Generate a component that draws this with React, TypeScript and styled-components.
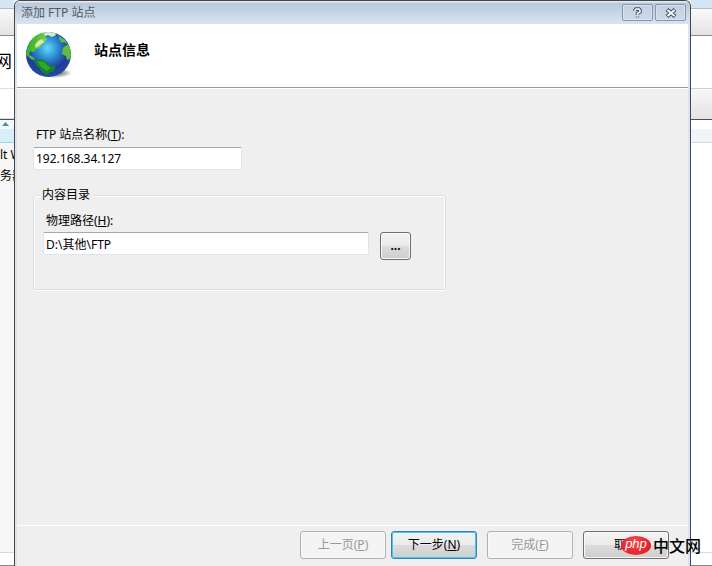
import React from "react";
import styled, { createGlobalStyle, css } from "styled-components";

const GlobalStyle = createGlobalStyle`
  * { box-sizing: border-box; }
  body {
    margin: 0;
    background: #fff;
    color: #000;
    font: 12px/16px "Noto Sans", "Noto Sans CJK SC", sans-serif;
    overflow: hidden;
  }
  button, input { font: inherit; color: inherit; }
`;

const Desktop = styled.main`
  position: relative;
  display: grid;
  grid-template-columns: 14px minmax(0, 1fr) 21px;
  height: 100vh;
`;

const Behind = styled.div`
  display: flex;
  flex-direction: column;
  overflow: hidden;
  white-space: nowrap;
`;

const Strip = styled.div<{ $h: number; $bg?: string; $line?: string }>`
  flex: none;
  height: ${(p) => p.$h}px;
  background: ${(p) => p.$bg ?? "#fff"};
  border-bottom: 1px solid ${(p) => p.$line ?? "transparent"};
`;

const Heading = styled(Strip)`
  padding-top: 12px;
  font: 18px/24px "Noto Sans CJK SC", sans-serif;
  text-indent: -6px;
`;

const SortHead = styled(Strip)`
  padding: 2px 0 0 2px;
  line-height: 0;
`;

const Tree = styled.div`
  flex: 1;
  background: #f6f6f6;
  border-bottom: 1px solid #d8d8d8;
  padding-top: 1px;
  line-height: 21px;
`;

const Blank = styled.div`
  flex: 1;
  border-bottom: 1px solid #dcdcdc;
`;

const Dialog = styled.section`
  display: flex;
  flex-direction: column;
  min-width: 0;
  border: solid #464648;
  border-width: 1px 1px 0;
  border-radius: 6px 6px 0 0;
  background: #d9e5f2;
  padding: 0 2px;
  overflow: hidden;
`;

const TitleBar = styled.header`
  display: flex;
  align-items: center;
  justify-content: space-between;
  height: 23px;
  margin: 0 -2px;
  padding: 0 4px 0 6px;
  background: linear-gradient(#e4edf6 0 1px, #b9c9da 2px, #d7e4f2);
  color: #505962;
`;

const Caption = styled.h1`
  margin: 0;
  font: inherit;
`;

const CaptionButtons = styled.div`
  display: flex;
  gap: 2px;
`;

const CaptionButton = styled.button`
  display: flex;
  align-items: center;
  justify-content: center;
  width: 31px;
  height: 17px;
  padding: 0;
  border: 1px solid #8796b2;
  border-radius: 2px;
  background: linear-gradient(#c3d0e0, #cbd9e9);
  box-shadow: inset 0 0 0 1px #d8e3ef;
`;

const Banner = styled.div`
  display: flex;
  gap: 21px;
  height: 65px;
  padding: 5px 6px;
  background: #fff;
  border-bottom: 1px solid #fff;
  box-shadow: inset 0 -1px #9b9b9b;
`;

const BannerTitle = styled.h2`
  margin: 11px 0 0;
  font-size: 14px;
  line-height: 20px;
  font-weight: 700;
`;

const Content = styled.form`
  flex: 1;
  padding: 38px 16px 0;
  background: #efefef;
`;

const Label = styled.label`
  display: block;
  margin: 0 0 4px 3px;
`;

const TextBox = styled.input<{ $wide?: boolean }>`
  display: block;
  width: ${(p) => (p.$wide ? 326 : 209)}px;
  height: 23px;
  padding: 0 2px;
  border: 1px solid #dfe5ee;
  border-top-color: #a3a8b2;
  border-radius: 2px;
  outline: none;
  background: #fff;
`;

const Group = styled.fieldset`
  width: 413px;
  height: 103px;
  margin: 17px 0 0;
  padding: 10px 9px 0;
  border: 1px solid #d5dfe5;
  border-radius: 3px;
  box-shadow: 0 1px #fff, inset 1px 1px #fff, inset -1px 0 #fff;

  legend {
    margin-left: -3px;
    padding: 0 2px;
    background: #efefef;
  }

  ${Label} { margin-bottom: 3px; }
`;

const PathRow = styled.div`
  display: flex;
  gap: 11px;
`;

const Footer = styled.footer`
  display: flex;
  justify-content: flex-end;
  height: 41px;
  padding: 5px 19px 0 0;
  border-top: 1px solid #fff;
  background: #efefef;
`;

const PushButton = styled.button<{ $primary?: boolean; $small?: boolean }>`
  width: 86px;
  height: 28px;
  padding: 0;
  border: 1px solid #707070;
  border-radius: 3px;
  background: linear-gradient(#f3f3f3, #ebebeb 48%, #dcdcdc 50%, #cecece);
  box-shadow: inset 0 0 0 1px #f8f8f8;

  &:disabled {
    border-color: #adb2b5;
    background: #f4f4f4;
    color: #989898;
  }

  ${(p) =>
    p.$primary &&
    css`
      border-color: #3c7fb1;
      box-shadow: inset 0 0 0 1px #42cbf2;
    `}

  ${(p) =>
    p.$small &&
    css`
      width: 31px;
      font-weight: 700;
    `}
`;

const Buttons = styled.div<{ $gap: number }>`
  display: flex;
  align-items: flex-start;
  gap: ${(p) => p.$gap}px;
`;

const Watermark = styled.div`
  position: absolute;
  right: 11px;
  bottom: 10px;
  display: flex;
  align-items: center;
  gap: 2px;
  font: 500 16px/22px "Noto Sans CJK SC", sans-serif;
`;

const Badge = styled.span`
  width: 30px;
  height: 19px;
  border-radius: 50%;
  background: radial-gradient(circle at 45% 30%, #f4444a, #e0141c);
  color: #fff;
  font: italic 13px/16px "Liberation Sans", sans-serif;
  text-align: center;
`;

const Globe = () => (
  <svg width="50" height="50" viewBox="0 0 50 50" aria-hidden="true">
    <defs>
      <radialGradient id="sea" cx="0.48" cy="0.36" r="0.62">
        <stop offset="0" stopColor="#62dcf5" />
        <stop offset="0.4" stopColor="#2b86d0" />
        <stop offset="0.75" stopColor="#1f3b9b" />
        <stop offset="1" stopColor="#264a9c" />
      </radialGradient>
      <radialGradient id="shade">
        <stop offset="0" stopColor="#444" stopOpacity="0.9" />
        <stop offset="0.6" stopColor="#666" stopOpacity="0.5" />
        <stop offset="1" stopColor="#777" stopOpacity="0" />
      </radialGradient>
      <linearGradient id="land" x1="0" y1="0.2" x2="1" y2="0.6">
        <stop offset="0" stopColor="#2f9a34" />
        <stop offset="0.45" stopColor="#4fbf2f" />
        <stop offset="1" stopColor="#8fdc5e" />
      </linearGradient>
      <clipPath id="disc"><circle cx="25.5" cy="25.5" r="22.5" /></clipPath>
    </defs>
    <ellipse cx="32" cy="44" rx="17" ry="5" fill="url(#shade)" />
    <circle cx="25.5" cy="25.5" r="22.5" fill="url(#sea)" />
    <g clipPath="url(#disc)">
      <path d="M3 22 6 13 13 6l8-3 3 2-2 3 2 2-2 3-4 3-1 3-4 1-2 3-4-1-1 4 4 2 2 3-4-1-6-5Z" fill="url(#land)" />
      <path d="m15 12 4-2 2 3-4 3-4 3-1-3Z" fill="#d9edab" />
      <path d="m20 4 4-2 8 2 1 2-4 2-4-2-2 1Z" fill="#d5ebc6" />
      <path d="m36 7 6 4 3 5-4-3-2 1-3-4Z" fill="#62b94d" />
      <path d="m42 17 4-2 3 9-2 6-3 1-1-4-4-2 1-6Z" fill="#61bd3c" />
      <path d="m12 31 6-1 6 3 2 3 7 1-2 5-5 2-2 2-5-3-4-5-3-3Z" fill="#16802e" />
      <path d="m14 32 7 1 4 4 3 2-4 3-6-4Z" fill="#2fa62e" />
    </g>
  </svg>
);

export default function App() {
  return (
    <>
      <GlobalStyle />
      <Desktop>
        <Behind>
          <Strip $h={9} $bg="#d5e5f3" $line="#aebdcb" />
          <Strip $h={27} $bg="linear-gradient(#fafafa, #e4e2e2)" $line="#8b8b8b" />
          <Heading $h={53} $line="#dedede">网</Heading>
          <Strip $h={29} />
          <Strip $h={2} $bg="#ddd" $line="#4b4b6b" />
          <SortHead $h={23} $bg="linear-gradient(#f1f9fd 40%, #d9eef8 42%)" $line="#9fd3ee">
            <svg width="7" height="4" viewBox="0 0 7 4"><path d="M0 4 3.5 0 7 4Z" fill="#4b8fb0" /></svg>
          </SortHead>
          <Tree>
            <div>lt Web Site</div>
            <div>务器</div>
          </Tree>
          <Strip $h={13} $line="#888" />
        </Behind>

        <Dialog role="dialog" aria-labelledby="caption">
          <TitleBar>
            <Caption id="caption">添加 FTP 站点</Caption>
            <CaptionButtons>
              <CaptionButton type="button" aria-label="帮助">
                <svg width="9" height="12" viewBox="0 0 9 12" fill="none">
                  <path d="M2 4V3L3 2h3l1 1v2L4.500 6.500V8M4.500 9.500v1" stroke="#454e64" strokeWidth="3.500" />
                  <path d="M2 4V3L3 2h3l1 1v2L4.500 6.500V8M4.500 9.500v1" stroke="#fff" strokeWidth="1.500" />
                </svg>
              </CaptionButton>
              <CaptionButton type="button" aria-label="关闭">
                <svg width="12" height="10" viewBox="0 0 12 10" fill="none">
                  <path d="m2 1.500 8 7M10 1.500l-8 7" stroke="#454e64" strokeWidth="4" />
                  <path d="m2.500 2 7 6M9.500 2l-7 6" stroke="#fff" strokeWidth="2" />
                </svg>
              </CaptionButton>
            </CaptionButtons>
          </TitleBar>
          <Banner>
            <Globe />
            <BannerTitle>站点信息</BannerTitle>
          </Banner>
          <Content id="site">
            <Label htmlFor="name">FTP 站点名称(<u>T</u>):</Label>
            <TextBox id="name" defaultValue="192.168.34.127" />
            <Group>
              <legend>内容目录</legend>
              <Label htmlFor="path">物理路径(<u>H</u>):</Label>
              <PathRow>
                <TextBox id="path" $wide defaultValue="D:\其他\FTP" />
                <PushButton type="button" $small aria-label="浏览">...</PushButton>
              </PathRow>
            </Group>
          </Content>
          <Footer>
            <Buttons $gap={10}>
              <Buttons $gap={5}>
                <PushButton type="button" disabled>上一页(<u>P</u>)</PushButton>
                <PushButton type="button" $primary>下一步(<u>N</u>)</PushButton>
              </Buttons>
              <PushButton type="button" disabled>完成(<u>F</u>)</PushButton>
              <PushButton type="button">取消</PushButton>
            </Buttons>
          </Footer>
        </Dialog>

        <Behind>
          <Strip $h={9} $bg="#d5e5f3" $line="#aebdcb" />
          <Strip $h={27} $bg="linear-gradient(#fafafa, #e4e2e2)" $line="#8b8b8b" />
          <Strip $h={53} $line="#d0d0d0" />
          <Strip $h={31} $bg="linear-gradient(#f8f8f8, #e4e2e2)" $line="#4b4b6b" />
          <Strip $h={9} />
          <Strip $h={14} $bg="#f2f5f8" $line="#d5d8dc" />
          <Blank />
          <Strip $h={13} $line="#888" />
        </Behind>

        <Watermark>
          <Badge>php</Badge>
          <span>中文网</span>
        </Watermark>
      </Desktop>
    </>
  );
}
